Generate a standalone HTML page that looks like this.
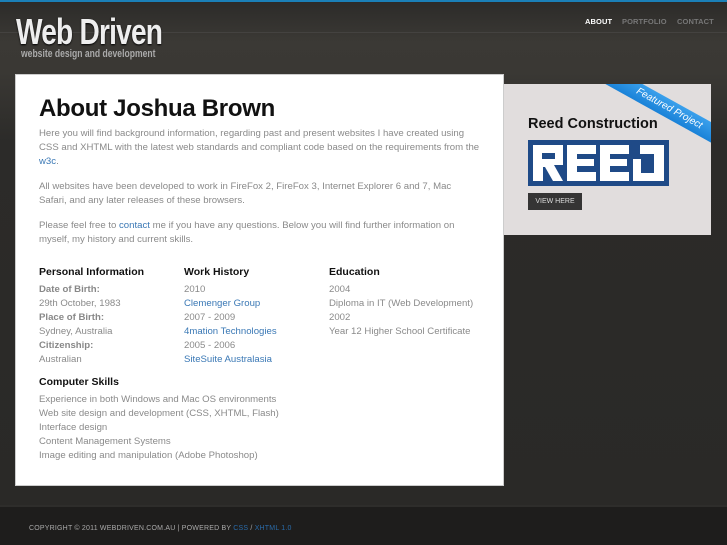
<!DOCTYPE html>
<html><head><meta charset="utf-8"><style>
*{margin:0;padding:0;box-sizing:border-box}
body{width:727px;height:545px;overflow:hidden;font-family:"Liberation Sans",sans-serif;background:#2a2927;position:relative}
.top{position:absolute;left:0;top:0;width:727px;height:2px;background:#1b80b8}
.hdr{position:absolute;left:0;top:2px;width:727px;height:503px;background:linear-gradient(180deg,#2c2b29 0,#3b3935 40px,#3a3834 70px,#2c2b29 140px,#2a2927 503px)}
.band{position:absolute;left:0;top:30px;width:727px;height:1px;background:#444240}
.logo{position:absolute;left:16px;top:11px;color:#eee;font-family:"Liberation Sans Narrow","Liberation Sans",sans-serif;font-weight:bold;font-size:36px;letter-spacing:-1px;transform:scaleX(.78);transform-origin:left;white-space:nowrap;text-shadow:0 1px 2px #000}
.tag{position:absolute;left:21px;top:48px;color:#aaa;font-family:"Liberation Sans Narrow","Liberation Sans",sans-serif;font-weight:bold;font-size:11px;transform:scaleX(.78);transform-origin:left;white-space:nowrap}
.nav{position:absolute;top:17px;font-size:7.5px;color:#777;font-weight:bold;letter-spacing:.1px}
.main{position:absolute;left:15px;top:74px;width:489px;height:412px;background:#fff;border:1px solid #ccc}
h1{position:absolute;left:23px;top:20px;font-size:24px;color:#111;letter-spacing:-.3px}
.p{position:absolute;left:23px;font-size:9.6px;line-height:14px;color:#8a8a8a;width:443px}
a{color:#3a78b5;text-decoration:none}
.h3{position:absolute;font-size:10.5px;font-weight:bold;color:#111}
.col{position:absolute;font-size:9.6px;line-height:14px;color:#8a8a8a;white-space:nowrap}
.col b{color:#888}
.feat{position:absolute;left:504px;top:84px;width:207px;height:151px;background:#e1dddd;overflow:hidden}
.ribbon{position:absolute;left:65px;top:16px;width:200px;height:18px;background:linear-gradient(#3aa0ec,#1a82d8);color:#fff;font-size:10px;font-style:italic;text-align:center;line-height:18px;transform:rotate(29deg);font-family:"Liberation Sans Narrow","Liberation Sans",sans-serif}
.ftr{position:absolute;left:0;top:505px;width:727px;height:40px;background:#1e1d1c;border-top:2px solid #2e2d2b}
.ftr div{position:absolute;left:29px;top:18px;font-size:7px;color:#aaa;letter-spacing:.2px}
</style></head><body>
<div class="hdr"><div class="band"></div></div>
<div class="top"></div>
<div class="logo">Web Driven</div>
<div class="tag">website design and development</div>
<div class="nav" style="left:585px;color:#fff">ABOUT</div>
<div class="nav" style="left:622px">PORTFOLIO</div>
<div class="nav" style="left:677px">CONTACT</div>
<div class="main">
<h1>About Joshua Brown</h1>
<div class="p" style="top:52px">Here you will find background information, regarding past and present websites I have created using CSS and XHTML with the latest web standards and compliant code based on the requirements from the <a>w3c</a>.</div>
<div class="p" style="top:105px;width:430px">All websites have been developed to work in FireFox 2, FireFox 3, Internet Explorer 6 and 7, Mac Safari, and any later releases of these browsers.</div>
<div class="p" style="top:144px">Please feel free to <a>contact</a> me if you have any questions. Below you will find further information on myself, my history and current skills.</div>
<div class="h3" style="left:23px;top:191px">Personal Information</div>
<div class="h3" style="left:168px;top:191px">Work History</div>
<div class="h3" style="left:313px;top:191px">Education</div>
<div class="col" style="left:23px;top:208px"><b>Date of Birth:</b><br>29th October, 1983<br><b>Place of Birth:</b><br>Sydney, Australia<br><b>Citizenship:</b><br>Australian</div>
<div class="col" style="left:168px;top:208px">2010<br><a>Clemenger Group</a><br>2007 - 2009<br><a>4mation Technologies</a><br>2005 - 2006<br><a>SiteSuite Australasia</a></div>
<div class="col" style="left:313px;top:208px">2004<br>Diploma in IT (Web Development)<br>2002<br>Year 12 Higher School Certificate</div>
<div class="h3" style="left:23px;top:301px">Computer Skills</div>
<div class="col" style="left:23px;top:318px">Experience in both Windows and Mac OS environments<br>Web site design and development (CSS, XHTML, Flash)<br>Interface design<br>Content Management Systems<br>Image editing and manipulation (Adobe Photoshop)</div>
</div>
<div class="feat">
<div style="position:absolute;left:24px;top:32px;font-size:14.5px;font-weight:bold;color:#111">Reed Construction</div>
<div class="ribbon">Featured Project</div>
<svg style="position:absolute;left:24px;top:56px" width="141" height="46" viewBox="0 0 141 46">
<rect width="141" height="46" fill="#1f4a87"/>
<g fill="#fff">
<path d="M5 5H35V25H26L35 41H25L17 27H15V41H5ZM14 13V19H27V13Z"/>
<path d="M39 5H68V14H49V19H66V26H49V32H68V41H39Z"/>
<path d="M72 5H101V14H82V19H99V26H82V32H101V41H72Z"/>
<path d="M112 5H136V41H105V19H113V33H126V14H112Z"/>
</g></svg>
<div style="position:absolute;left:24px;top:109px;width:54px;height:17px;background:#353434;color:#ddd;font-size:7px;text-align:center;line-height:17px">VIEW HERE</div>
</div>
<div class="ftr"><div>COPYRIGHT © 2011 WEBDRIVEN.COM.AU | POWERED BY <a style="color:#2a6aa8">CSS</a> / <a style="color:#2a6aa8">XHTML 1.0</a></div></div>
</body></html>
